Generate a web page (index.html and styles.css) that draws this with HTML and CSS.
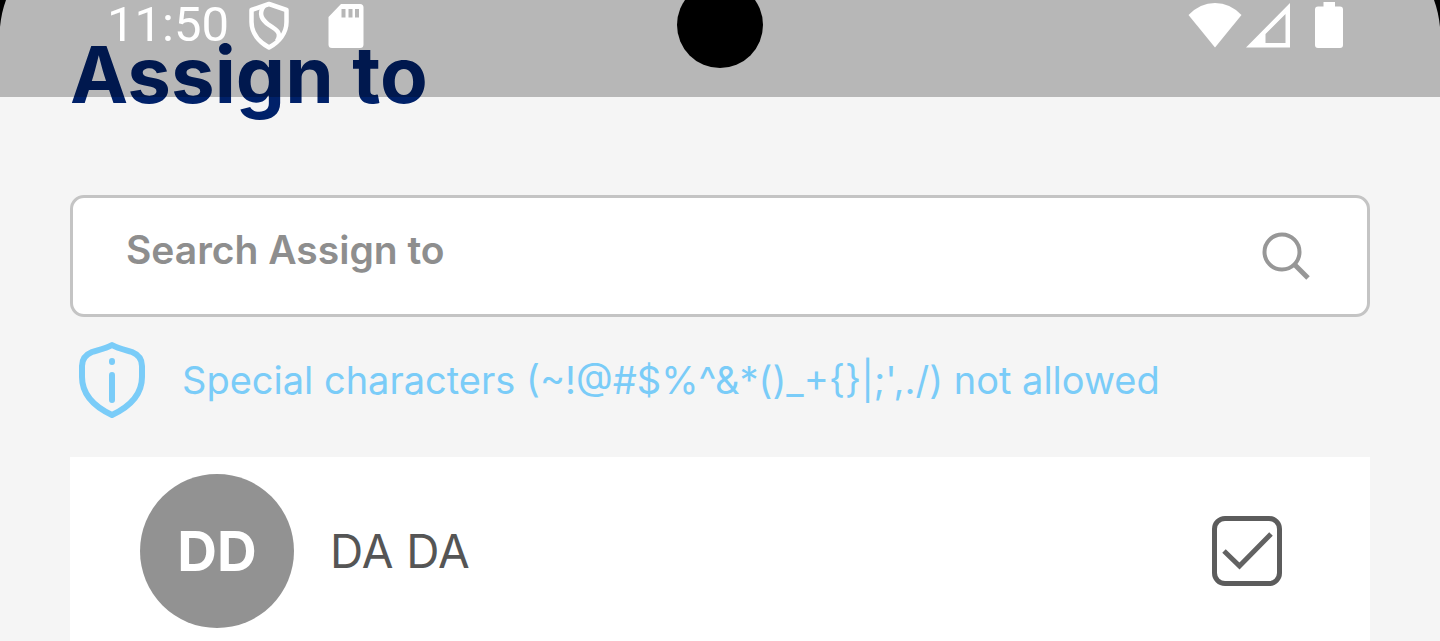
FILE: index.html
```html
<!DOCTYPE html>
<html lang="en">
<head>
    <meta charset="UTF-8">
    <meta name="viewport" content="width=device-width, initial-scale=1.0">
    <title>Assign to</title>
    <link rel="stylesheet" href="styles.css">
</head>
<body>
    <header class="status-bar">
        <svg class="corner" viewBox="0 0 8 28"><path d="M0 0H6Q1.500 12 0 27Z"/></svg>
        <div class="status-left">
            <span class="time">11:50</span>
            <svg class="shield" viewBox="0 0 40 50" fill="none" stroke="#fff" stroke-width="4.500" stroke-linejoin="round">
                <path d="M20 4L37.500 10V22C37.500 33 30 42 20 47.500C10 42 2.500 33 2.500 22V10Z"/>
                <path d="M15 6C9 14 13 20 20 25C28 30 33 33 28 41"/>
            </svg>
            <svg class="sd-card" viewBox="0 0 36 46">
                <path fill="#fff" fill-rule="evenodd" d="M13 2H32Q35.500 2 35.500 5.500V42.500Q35.500 46 32 46H4Q.5 46 .5 42.500V15ZM13.500 7V15.500H17.500V7ZM20.500 7V15.500H24.500V7ZM27 7V15.500H31V7Z"/>
            </svg>
        </div>
        <div class="camera"></div>
        <div class="status-right">
            <svg class="wifi" viewBox="0 0 54 46"><path fill="#fff" d="M.5 13Q12 1 27 1T53.500 13L27 45.500Z"/></svg>
            <svg class="signal" viewBox="0 0 44 46"><path fill="#fff" fill-rule="evenodd" d="M44 1V45.500H0ZM39.500 12L19.500 32V41H39.500Z"/></svg>
            <svg class="battery" viewBox="0 0 28 46"><path fill="#fff" d="M8.500 0H20V4.500H25Q28 4.500 28 7.500V43Q28 46 25 46H3Q0 46 0 43V7.500Q0 4.500 3 4.500H8.500Z"/></svg>
        </div>
        <svg class="corner corner-right" viewBox="0 0 8 28"><path d="M0 0H6Q1.500 12 0 27Z"/></svg>
    </header>

    <main class="container">
        <h1>Assign to</h1>

        <div class="search-box">
            <input type="text" id="search" placeholder="Search Assign to" aria-label="Search Assign to">
            <button type="button" class="search-btn" aria-label="Search">
                <svg viewBox="0 0 48 48" fill="none" stroke="#979797" stroke-width="4">
                    <circle cx="20" cy="20" r="17.500"/>
                    <path d="M32 32L46 46" stroke-width="5"/>
                </svg>
            </button>
        </div>

        <div class="hint">
            <svg viewBox="0 0 68 78" fill="none" stroke="#7accf8" stroke-width="6" stroke-linecap="round" stroke-linejoin="round">
                <path d="M34 4C27 8 20 9 14 11Q4 15 4 25V36C4 54 17 66 34 74C51 66 64 54 64 36V25Q64 15 54 11C48 9 41 8 34 4Z"/>
                <path d="M34 34V59M34 20V21"/>
            </svg>
            <p>Special characters (~!@#$%^&amp;*()_+{}|;',./) not allowed</p>
        </div>

        <div class="list">
            <div class="list-item">
                <div class="avatar">DD</div>
                <label for="user1">DA DA</label>
                <div class="check">
                    <input type="checkbox" id="user1" checked>
                    <svg viewBox="0 0 70 70" fill="none" stroke="#626262" stroke-width="5"><path d="M12 35L27.500 50L59 18"/></svg>
                </div>
            </div>
        </div>
    </main>
</body>
</html>
```
FILE: styles.css
```css
* {
    box-sizing: border-box;
}

body {
    margin: 0;
    font-family: Inter, sans-serif;
    background-color: #f5f5f5;
}

svg {
    display: block;
}

/* translucent bar lying over the page */
.status-bar {
    position: absolute;
    top: 0;
    left: 0;
    right: 0;
    height: 97px;
    background: rgba(0, 0, 0, 0.25);
    display: flex;
    justify-content: space-between;
    align-items: flex-start;
    padding: 0 97px 0 107px;
}

.corner {
    position: absolute;
    top: 0;
    left: 0;
    width: 8px;
    height: 28px;
}

.corner-right {
    left: auto;
    right: 0;
    transform: scaleX(-1);
}

.status-left,
.status-right {
    display: flex;
    align-items: center;
    height: 50px;
}

.time {
    font-family: Roboto, sans-serif;
    font-size: 49px;
    line-height: 50px;
    color: white;
}

.shield {
    width: 40px;
    height: 50px;
    margin-left: 20px;
}

.sd-card {
    width: 36px;
    height: 46px;
    margin-left: 39px;
}

.camera {
    position: absolute;
    top: -18px;
    left: 50%;
    width: 86px;
    height: 86px;
    margin-left: -43px;
    border-radius: 50%;
    background: black;
}

.wifi {
    width: 54px;
    height: 46px;
}

.signal {
    width: 44px;
    height: 46px;
    margin-left: 4px;
}

.battery {
    width: 28px;
    height: 46px;
    margin-left: 25px;
}

.container {
    padding: 25px 70px 0;
}

h1 {
    margin: 0;
    font-size: 78px;
    line-height: 100px;
    font-weight: bold;
    color: #002169;
}

.search-box {
    display: flex;
    align-items: center;
    height: 122px;
    margin-top: 70px;
    padding: 0 57px 0 53px;
    background: white;
    border: 3px solid #c4c4c4;
    border-radius: 14px;
}

.search-box input {
    flex: 1;
    min-width: 0;
    height: 100%;
    padding: 0 0 14px;
    border: none;
    outline: none;
    background: none;
    font-family: inherit;
    font-size: 39px;
    font-weight: 600;
    color: #555;
}

.search-box input::placeholder {
    color: #8e8e8e;
    opacity: 1;
}

.search-btn {
    width: 48px;
    height: 48px;
    padding: 0;
    border: none;
    background: none;
    cursor: pointer;
}

.hint {
    display: flex;
    align-items: center;
    margin-top: 24px;
    padding-left: 8px;
    gap: 36px;
}

.hint svg {
    width: 68px;
    height: 78px;
}

.hint p {
    margin: 0;
    font-size: 38px;
    color: #7accf8;
}

.list {
    margin-top: 38px;
    background: white;
}

.list-item {
    display: flex;
    align-items: center;
    padding: 17px 88px 17px 70px;
}

.avatar {
    width: 154px;
    height: 154px;
    border-radius: 50%;
    background: #929292;
    color: white;
    font-size: 55px;
    font-weight: bold;
    line-height: 154px;
    text-align: center;
}

.list-item label {
    flex: 1;
    margin-left: 36px;
    font-size: 46px;
    color: #555;
}

.check {
    position: relative;
    width: 70px;
    height: 70px;
}

.check input {
    appearance: none;
    display: block;
    width: 70px;
    height: 70px;
    margin: 0;
    border: 5px solid #5c5c5c;
    border-radius: 13px;
    background: white;
}

.check svg {
    position: absolute;
    top: 0;
    left: 0;
    pointer-events: none;
    visibility: hidden;
}

.check input:checked + svg {
    visibility: visible;
}
```
